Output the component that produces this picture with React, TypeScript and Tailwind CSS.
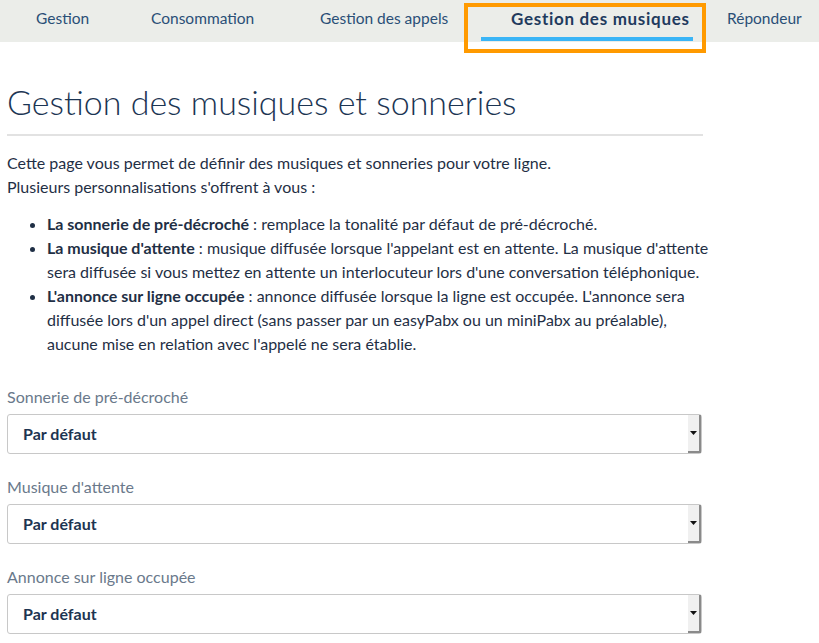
import React from 'react';

const tabs = [
  { label: 'Gestion', cls: 'w-[122px] pl-[36px]' },
  { label: 'Consommation', cls: 'w-[170px] pl-[29px]' },
  { label: 'Gestion des appels', cls: 'w-[174px] pl-[28px]' },
];

const fields = ['Sonnerie de pré-décroché', "Musique d'attente", 'Annonce sur ligne occupée'];

function Select() {
  return (
    <div className="flex h-[40px] w-[695px] items-stretch rounded-[3px] border border-[#c8c8c8] bg-white">
      <div className="flex flex-1 items-center pl-[15px] text-[16px] font-bold text-[#1d3451]">Par défaut</div>
      <div className="flex w-[13px] items-center justify-center border-r-2 border-b-2 border-[#8a8a8a] bg-[#f0f0f0]">
        <svg width="7" height="4" viewBox="0 0 7 4">
          <path d="M0 0h7L3.5 4z" fill="#111" />
        </svg>
      </div>
    </div>
  );
}

export default function App() {
  return (
    <div className="min-h-[643px] bg-white font-['Lato',sans-serif] text-[#1f2f45]">
      <nav className="relative flex h-[42px] items-stretch bg-[#ebede9] text-[15.5px] text-[#2a4f77]">
        {tabs.map((t) => (
          <div key={t.label} className={`flex items-center pb-[4px] ${t.cls}`}>
            {t.label}
          </div>
        ))}
        <div className="relative w-[245px]">
          <div className="absolute left-[-2px] top-[3px] h-[50px] w-[242px] border-4 border-[#ff9a00]" />
          <div className="flex h-full items-center pb-[4px] pl-[45px] text-[17px] font-bold tracking-[0.7px] text-[#1f3b5e]">
            Gestion des musiques
          </div>
          <div className="absolute left-[15px] top-[37px] h-[4px] w-[212px] bg-[#3ab5f6]" />
        </div>
        <div className="flex items-center pb-[4px] pl-[16px]">Répondeur</div>
      </nav>

      <main className="w-[703px] pl-[7px]">
        <h1 className="mt-[40px] text-[34px] font-light leading-[40px] text-[#1c3553]">
          Gestion des musiques et sonneries
        </h1>
        <hr className="mt-[12px] border-t-2 border-[#e2e2e2]" />

        <div className="mt-[15px] text-[16px] leading-[24px]">
          <p>Cette page vous permet de définir des musiques et sonneries pour votre ligne.</p>
          <p>Plusieurs personnalisations s'offrent à vous :</p>
          <ul className="mt-[13px] list-disc whitespace-nowrap pl-[40px]">
            <li>
              <b>La sonnerie de pré-décroché</b> : remplace la tonalité par défaut de pré-décroché.
            </li>
            <li>
              <b>La musique d'attente</b> : musique diffusée lorsque l'appelant est en attente. La musique d'attente
              <br />
              sera diffusée si vous mettez en attente un interlocuteur lors d'une conversation téléphonique.
            </li>
            <li>
              <b>L'annonce sur ligne occupée</b> : annonce diffusée lorsque la ligne est occupée. L'annonce sera
              <br />
              diffusée lors d'un appel direct (sans passer par un easyPabx ou un miniPabx au préalable),
              <br />
              aucune mise en relation avec l'appelé ne sera établie.
            </li>
          </ul>
        </div>

        <div className="mt-[31px] flex flex-col gap-[23px]">
          {fields.map((f) => (
            <div key={f}>
              <div className="mb-[7px] text-[16px] leading-[20px] text-[#6a798b]">{f}</div>
              <Select />
            </div>
          ))}
        </div>
      </main>
    </div>
  );
}
